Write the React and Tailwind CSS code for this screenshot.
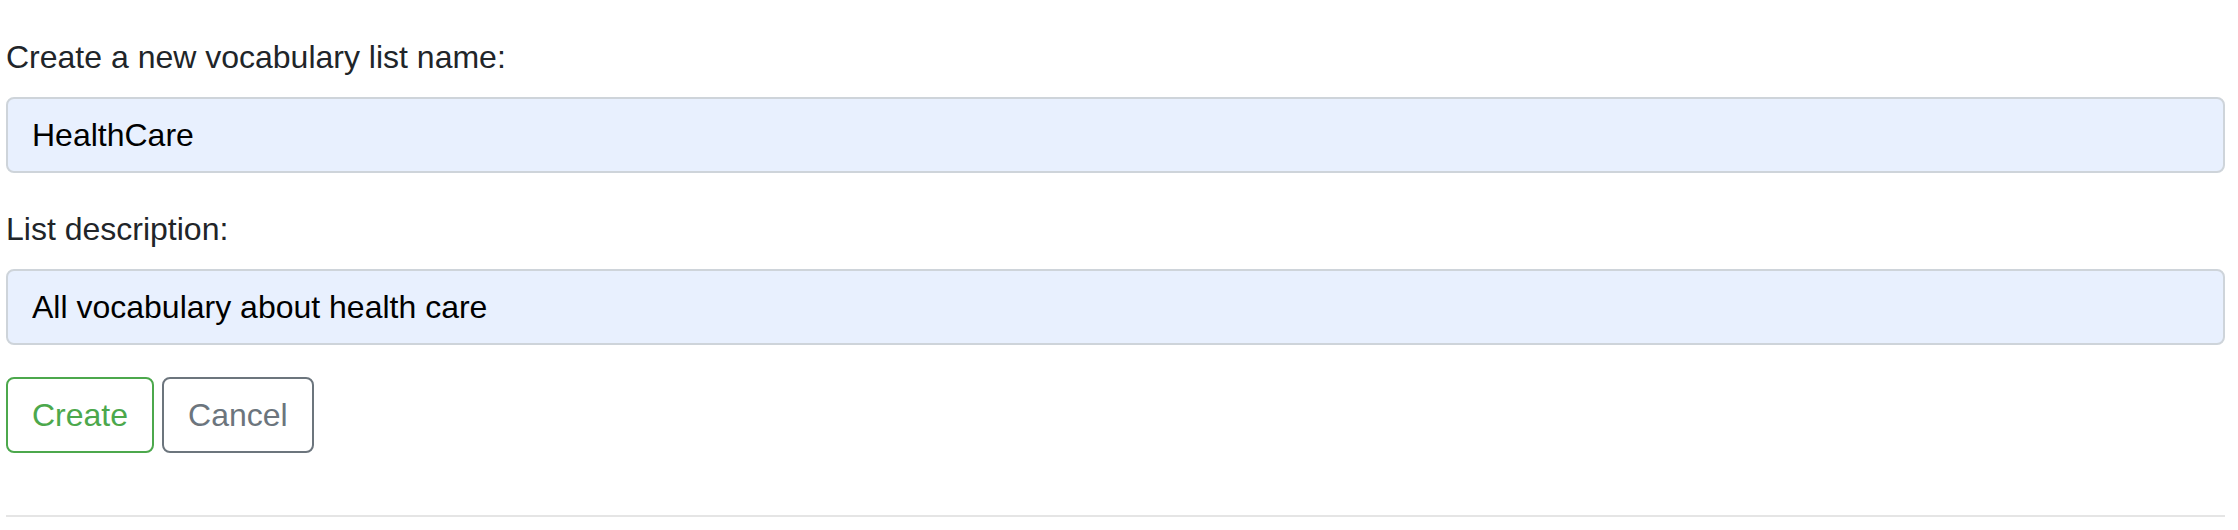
export default function App() {
  return (
    <div className="min-h-[530px] bg-white pl-[6px] pr-[13px] pt-[33px] font-['Liberation_Sans',Arial,sans-serif] text-[32px] leading-[48px] text-[#212529]">
      <form onSubmit={(event) => event.preventDefault()}>
        <div className="mb-[32px]">
          <label className="mb-[16px] block" htmlFor="listName">
            Create a new vocabulary list name:
          </label>
          <input
            id="listName"
            className="block h-[76px] w-full rounded-[8px] border-2 border-[#ced4da] bg-[#e8f0fe] px-[24px] text-[32px] text-black outline-none"
            defaultValue="HealthCare"
            type="text"
          />
        </div>

        <div className="mb-[32px]">
          <label className="mb-[16px] block" htmlFor="listDescription">
            List description:
          </label>
          <input
            id="listDescription"
            className="block h-[76px] w-full rounded-[8px] border-2 border-[#ced4da] bg-[#e8f0fe] px-[24px] text-[32px] text-black outline-none"
            defaultValue="All vocabulary about health care"
            type="text"
          />
        </div>

        <div className="flex gap-[8px]">
          <button
            className="h-[76px] rounded-[8px] border-2 border-[#4ca84c] bg-white px-[24px] text-[32px] leading-[48px] text-[#4ca84c]"
            type="submit"
          >
            Create
          </button>
          <button
            className="h-[76px] rounded-[8px] border-2 border-[#6c757d] bg-white px-[24px] text-[32px] leading-[48px] text-[#6c757d]"
            type="button"
          >
            Cancel
          </button>
        </div>
      </form>

      <hr className="mt-[62px] border-t-2 border-[#e5e5e5]" />
    </div>
  );
}
